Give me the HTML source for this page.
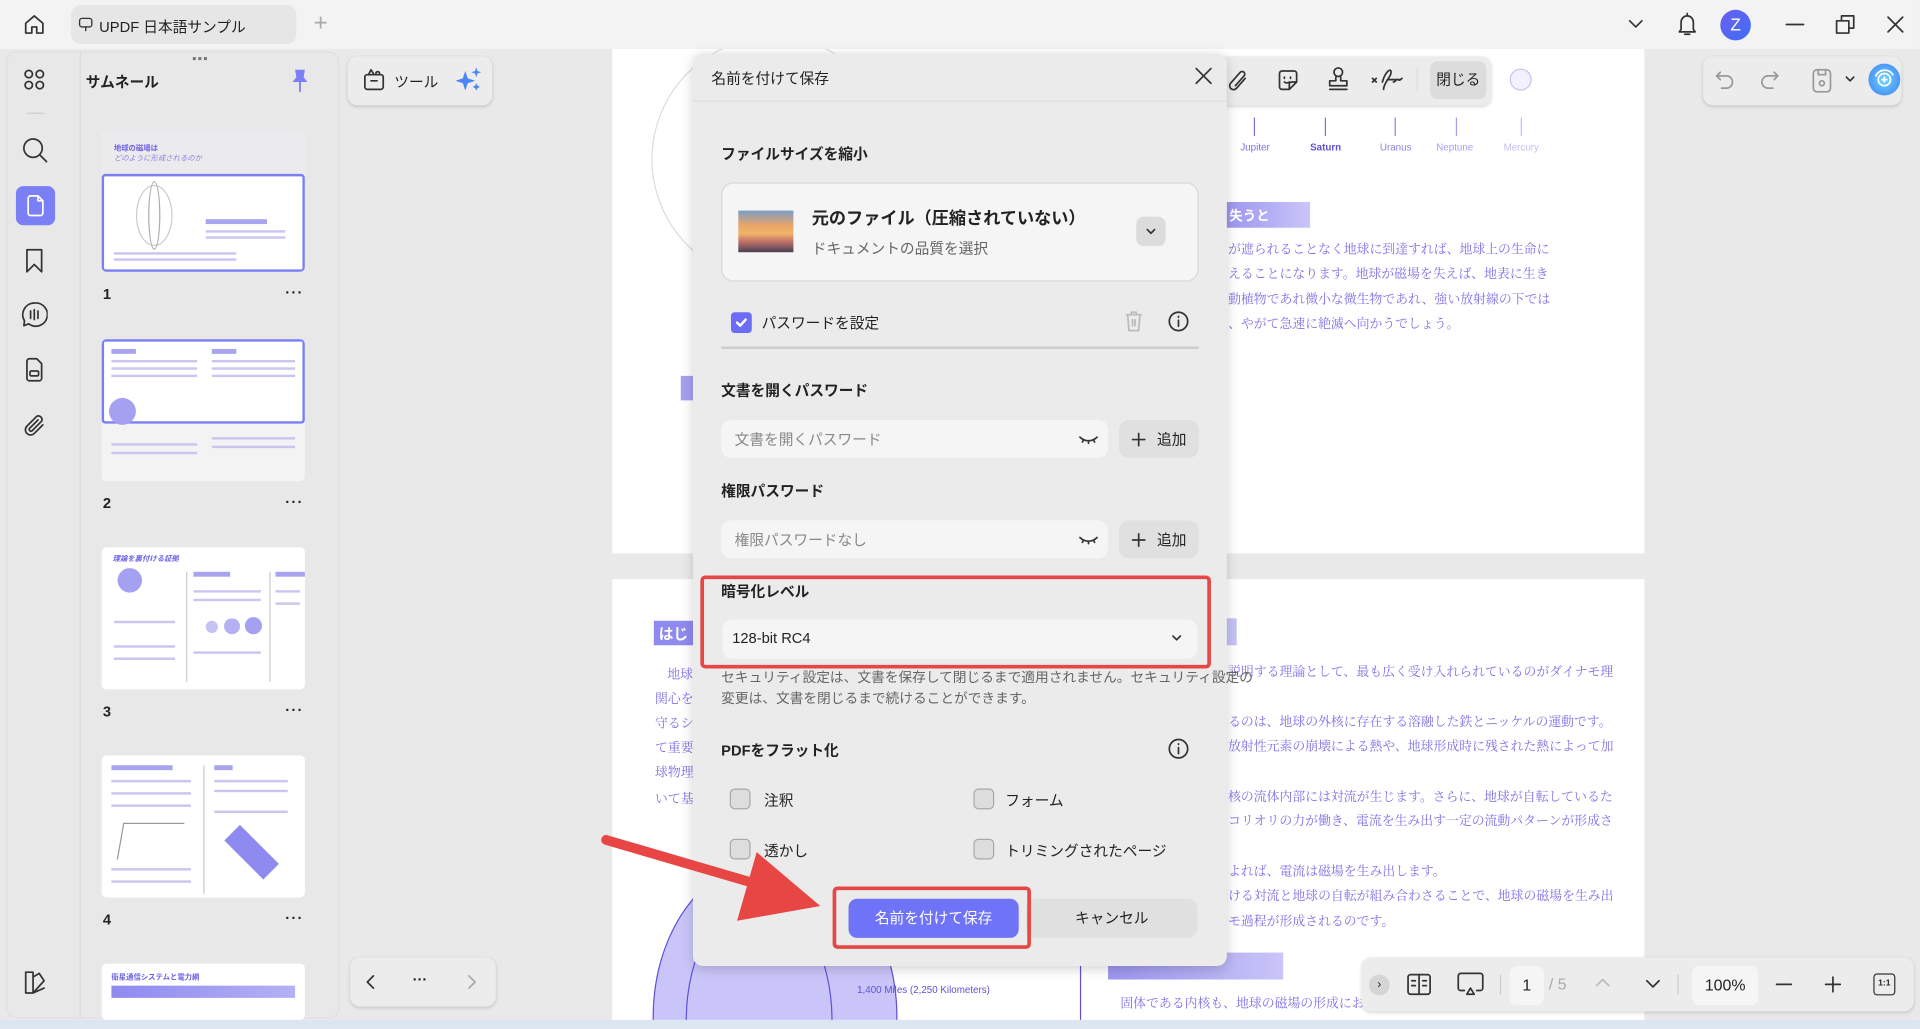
<!DOCTYPE html>
<html><head><meta charset="utf-8">
<style>
*{box-sizing:border-box;margin:0;padding:0}
html,body{width:1920px;height:1029px;overflow:hidden;background:#e9e9e9}
#w{position:absolute;left:0;top:0;width:1568px;height:840px;overflow:hidden;transform:scale(1.2244);transform-origin:0 0;background:#e9e9e9;font-family:"Liberation Sans","Noto Sans CJK JP",sans-serif;color:#222;font-size:12px}
.a{position:absolute}
.ic{position:absolute;fill:none;stroke:#333;stroke-width:1.4;stroke-linecap:round;stroke-linejoin:round}
.pt{position:absolute;font-family:"Noto Serif CJK JP","Noto Serif CJK SC",serif;color:#7d70e6;font-size:10.5px;white-space:nowrap}
.th{position:absolute;left:83px;width:166px;background:#fff;border-radius:4px;overflow:hidden}
.tl{position:absolute;height:2px;background:#c9c6ef}
.num{position:absolute;left:84px;font-size:12px;font-weight:bold}
.dots{position:absolute;left:233px;font-size:12px;font-weight:bold;letter-spacing:1px}
.cb{position:absolute;width:17px;height:17px;border:1.5px solid #aaa;border-radius:4px;background:#ddd}
.lb{position:absolute;font-size:12px;white-space:nowrap}
.h{position:absolute;font-size:12px;font-weight:bold;white-space:nowrap}
.add{position:absolute;left:914px;width:65px;height:31px;background:#e0e0e0;border-radius:8px;display:flex;align-items:center;justify-content:center;gap:9px;font-size:12px}
</style></head><body><div id="w">
<!-- top bar -->
<div class="a" style="left:0;top:0;width:1568px;height:40px;background:#f3f3f3"></div>
<svg class="ic" style="left:19px;top:11px" width="18" height="18" viewBox="0 0 18 18"><path d="M2 8L9 2l7 6v8H11v-5H7v5H2z"/></svg>
<div class="a" style="left:58px;top:4px;width:184px;height:32px;background:#e6e6e6;border-radius:8px"></div>
<svg class="ic" style="left:64px;top:14px;stroke-width:1.1" width="12" height="12" viewBox="0 0 12 12"><rect x="1" y="1" width="10" height="7" rx="2"/><path d="M6 8v3"/></svg>
<div class="lb" style="left:81px;top:13px;font-size:12px">UPDF 日本語サンプル</div>
<div class="lb" style="left:256px;top:8px;font-size:20px;color:#aaa;font-weight:200">+</div>
<svg class="ic" style="left:1329px;top:15px" width="14" height="10" viewBox="0 0 14 10"><path d="M2 2l5 5 5-5"/></svg>
<svg class="ic" style="left:1369px;top:10px" width="18" height="20" viewBox="0 0 18 20"><path d="M4 14V8a5 5 0 0110 0v6l1.5 2h-13z M7 18h4 M9 1v2"/></svg>
<div class="a" style="left:1405px;top:8px;width:25px;height:25px;border-radius:50%;background:linear-gradient(135deg,#6a5ff0,#3f6ef5);color:#fff;text-align:center;line-height:25px;font-size:14px">Z</div>
<svg class="ic" style="left:1458px;top:12px" width="16" height="16" viewBox="0 0 16 16"><path d="M1 8h14"/></svg>
<svg class="ic" style="left:1499px;top:12px" width="16" height="16" viewBox="0 0 16 16"><rect x="1" y="5" width="10" height="10"/><path d="M5 5V1h10v10h-4"/></svg>
<svg class="ic" style="left:1540px;top:12px" width="16" height="16" viewBox="0 0 16 16"><path d="M2 2l12 12M14 2L2 14"/></svg>

<!-- left panel -->
<div class="a" style="left:5px;top:42px;width:272px;height:790px;background:#e8e8e8;border-radius:8px;border:1px solid #e0e0e0"></div>
<div class="a" style="left:65px;top:42px;width:1px;height:790px;background:#dcdcdc"></div>
<div class="a" style="left:157px;top:43px;font-size:10px;color:#777;letter-spacing:1px">▪▪▪</div>
<svg class="ic" style="left:19px;top:56px" width="18" height="18" viewBox="0 0 18 18"><circle cx="4.5" cy="4.5" r="3"/><circle cx="13.5" cy="4.5" r="3"/><circle cx="4.5" cy="13.5" r="3"/><circle cx="13.5" cy="13.5" r="3"/></svg>
<div class="a" style="left:22px;top:92px;width:14px;height:1px;background:#ccc"></div>
<svg class="ic" style="left:18px;top:112px" width="22" height="22" viewBox="0 0 22 22"><circle cx="9" cy="9" r="7.5"/><path d="M15 15l5 5"/></svg>
<div class="a" style="left:13px;top:152px;width:32px;height:32px;background:#7b7ff5;border-radius:6px"></div>
<svg class="ic" style="left:21px;top:159px;stroke:#fff" width="16" height="18" viewBox="0 0 16 18"><path d="M2 3a2 2 0 012-2h6l4 4v10a2 2 0 01-2 2H4a2 2 0 01-2-2z M10 1v4h4"/></svg>
<svg class="ic" style="left:20px;top:203px" width="16" height="20" viewBox="0 0 16 20"><path d="M2 1h12v18l-6-6-6 6z"/></svg>
<svg class="ic" style="left:17px;top:246px" width="22" height="22" viewBox="0 0 22 22"><path d="M11 1.5a9.5 9.5 0 00-8 14.5L2.5 20l4-1.5A9.5 9.5 0 1011 1.5z M8 8v6 M11 7v8 M14 8v6"/></svg>
<svg class="ic" style="left:20px;top:292px" width="16" height="20" viewBox="0 0 16 20"><path d="M2 3a2 2 0 012-2h6l4 4v12a2 2 0 01-2 2H4a2 2 0 01-2-2z"/><rect x="4.5" y="11" width="7" height="4" rx="1"/></svg>
<svg class="ic" style="left:19px;top:337px" width="20" height="22" viewBox="0 0 20 22"><path d="M16 10l-7 7a4 4 0 01-6-6l8-8a3 3 0 014 4l-8 8a1.5 1.5 0 01-2-2l7-7"/></svg>
<svg class="ic" style="left:19px;top:793px" width="20" height="20" viewBox="0 0 20 20"><path d="M2 1h6v17H2z M8 5l5-3 4 6-9 10 M8 18l9-4"/></svg>

<div class="lb" style="left:70px;top:58px;font-size:12px;font-weight:bold">サムネール</div>
<svg class="a" style="left:237px;top:56px" width="16" height="20" viewBox="0 0 16 20"><path d="M4 1h8l-1 6 3 4H2l3-4z" fill="#7b7ff5"/><path d="M8 11v8" stroke="#7b7ff5" stroke-width="1.5"/></svg>

<!-- thumbnails -->
<div class="th" style="top:106px;height:116px;background:#f3f3f3">
 <div class="a" style="left:0;top:0;width:166px;height:36px;background:#ebebed"></div>
 <div class="a" style="left:10px;top:10px;font-size:6px;font-weight:bold;color:#6b5fe6">地球の磁場は</div>
 <div class="a" style="left:10px;top:18px;font-size:6px;color:#8a80e0;font-style:italic">どのように形成されるのか</div>
 <div class="a" style="left:0;top:36px;width:166px;height:80px;background:#fff;border:2px solid #7b7ff5;border-radius:3px"></div>
 <div class="a" style="left:28px;top:45px;width:30px;height:50px;border:1px solid #ccc;border-radius:50%"></div>
 <div class="a" style="left:38px;top:42px;width:10px;height:56px;border:1px solid #aaa;border-radius:50%"></div>
 <div class="tl" style="left:85px;top:73px;width:50px;background:#a8a4f0;height:4px"></div>
 <div class="tl" style="left:85px;top:82px;width:65px"></div><div class="tl" style="left:85px;top:87px;width:65px"></div>
 <div class="tl" style="left:10px;top:100px;width:100px"></div><div class="tl" style="left:10px;top:105px;width:100px"></div>
</div>
<div class="num" style="top:233px">1</div><div class="dots" style="top:232px">···</div>
<div class="th" style="top:277px;height:116px;background:#f3f3f3">
 <div class="a" style="left:0;top:0;width:166px;height:69px;background:#fff;border:2px solid #7b7ff5;border-radius:3px"></div>
 <div class="tl" style="left:8px;top:8px;width:20px;height:4px;background:#a8a4f0"></div><div class="tl" style="left:90px;top:8px;width:20px;height:4px;background:#a8a4f0"></div>
 <div class="tl" style="left:8px;top:17px;width:70px"></div><div class="tl" style="left:8px;top:23px;width:70px"></div><div class="tl" style="left:8px;top:29px;width:70px"></div>
 <div class="tl" style="left:90px;top:17px;width:68px"></div><div class="tl" style="left:90px;top:23px;width:68px"></div><div class="tl" style="left:90px;top:29px;width:68px"></div>
 <div class="a" style="left:6px;top:48px;width:22px;height:22px;border-radius:50%;background:#a5a1f1"></div>
 <div class="tl" style="left:8px;top:85px;width:70px"></div><div class="tl" style="left:8px;top:92px;width:70px"></div><div class="tl" style="left:90px;top:80px;width:68px"></div><div class="tl" style="left:90px;top:87px;width:68px"></div>
</div>
<div class="num" style="top:404px">2</div><div class="dots" style="top:403px">···</div>
<div class="th" style="top:447px;height:116px">
 <div class="a" style="left:9px;top:4px;font-size:6px;font-weight:bold;color:#6b5fe6;font-style:italic">理論を裏付ける証拠</div>
 <div class="a" style="left:13px;top:17px;width:20px;height:20px;border-radius:50%;background:#a5a1f1"></div>
 <div class="a" style="left:69px;top:20px;width:1px;height:90px;background:#ccc"></div><div class="a" style="left:137px;top:20px;width:1px;height:90px;background:#ccc"></div>
 <div class="tl" style="left:75px;top:20px;width:30px;height:4px;background:#a8a4f0"></div><div class="tl" style="left:142px;top:20px;width:30px;height:4px;background:#a8a4f0"></div>
 <div class="a" style="left:85px;top:60px;width:10px;height:10px;border-radius:50%;background:#c5c2f5"></div><div class="a" style="left:100px;top:58px;width:13px;height:13px;border-radius:50%;background:#b3b0f3"></div><div class="a" style="left:117px;top:57px;width:14px;height:14px;border-radius:50%;background:#a5a1f1"></div>
 <div class="tl" style="left:10px;top:60px;width:50px"></div><div class="tl" style="left:10px;top:80px;width:50px"></div><div class="tl" style="left:10px;top:90px;width:50px"></div><div class="tl" style="left:75px;top:35px;width:55px"></div><div class="tl" style="left:75px;top:42px;width:55px"></div><div class="tl" style="left:142px;top:35px;width:20px"></div><div class="tl" style="left:142px;top:45px;width:20px"></div><div class="tl" style="left:75px;top:85px;width:55px"></div>
</div>
<div class="num" style="top:574px">3</div><div class="dots" style="top:573px">···</div>
<div class="th" style="top:617px;height:116px">
 <div class="tl" style="left:8px;top:8px;width:50px;height:4px;background:#a8a4f0"></div><div class="tl" style="left:92px;top:8px;width:15px;height:4px;background:#a8a4f0"></div>
 <div class="a" style="left:83px;top:8px;width:1px;height:105px;background:#ccc"></div>
 <div class="tl" style="left:8px;top:20px;width:65px"></div><div class="tl" style="left:8px;top:30px;width:65px"></div><div class="tl" style="left:8px;top:40px;width:65px"></div>
 <div class="tl" style="left:92px;top:20px;width:60px"></div><div class="tl" style="left:92px;top:28px;width:60px"></div><div class="tl" style="left:92px;top:45px;width:60px"></div>
 <div class="a" style="left:15px;top:55px;width:50px;height:30px;border-left:1px solid #999;border-top:1px solid #999;transform:skewX(-10deg)"></div>
 <div class="a" style="left:100px;top:70px;width:45px;height:18px;background:#8f8af0;transform:rotate(45deg)"></div>
 <div class="tl" style="left:8px;top:92px;width:65px"></div><div class="tl" style="left:8px;top:102px;width:65px"></div>
</div>
<div class="num" style="top:744px">4</div><div class="dots" style="top:743px">···</div>
<div class="th" style="top:787px;height:46px">
 <div class="a" style="left:8px;top:6px;font-size:6px;font-weight:bold;color:#6b5fe6">衛星通信システムと電力網</div>
 <div class="a" style="left:8px;top:18px;width:150px;height:10px;background:linear-gradient(90deg,#8f8af0,#b4b1f5)"></div>
</div>

<!-- tools pill -->
<div class="a" style="left:284px;top:46px;width:118px;height:40px;background:#ececec;border-radius:8px;box-shadow:0 1px 3px rgba(0,0,0,.15)"></div>
<svg class="ic" style="left:296px;top:55px" width="20" height="20" viewBox="0 0 20 20"><rect x="2" y="6" width="15" height="12" rx="2"/><path d="M7 11h5 M5 6l2-4 2 3 M11 5a1.5 1.5 0 113 0"/></svg>
<div class="lb" style="left:322px;top:58px">ツール</div>
<svg class="a" style="left:372px;top:54px" width="22" height="22" viewBox="0 0 22 22"><path d="M8 4l2 6 6 2-6 2-2 6-2-6-6-2 6-2z" fill="#4a86f5"/><path d="M17 1l1 3 3 1-3 1-1 3-1-3-3-1 3-1z M17 14l1 2 2 1-2 1-1 2-1-2-2-1 2-1z" fill="#4a86f5"/></svg>
<div class="a" style="left:286px;top:782px;width:119px;height:40px;background:#ececec;border-radius:8px;box-shadow:0 1px 3px rgba(0,0,0,.15)"></div>
<svg class="ic" style="left:298px;top:795px" width="10" height="14" viewBox="0 0 10 14"><path d="M7 2L2 7l5 5"/></svg>
<div class="lb" style="left:337px;top:793px;font-weight:bold">···</div>
<svg class="ic" style="left:380px;top:795px;stroke:#aaa" width="10" height="14" viewBox="0 0 10 14"><path d="M3 2l5 5-5 5"/></svg>

<!-- pages -->
<div class="a" style="left:500px;top:40px;width:843px;height:412px;background:#fff;overflow:hidden">
 <div class="a" style="left:32px;top:-10px;width:200px;height:200px;border:1px solid #ddd;border-radius:50%"></div>
 <div class="a" style="left:56px;top:267px;width:10px;height:20px;background:#a5a1f1"></div>
</div>
<div class="a" style="left:1024px;top:96px;width:1px;height:15px;background:#7d70e6"></div><div class="a" style="left:1082px;top:96px;width:1px;height:15px;background:#7d70e6"></div><div class="a" style="left:1139px;top:96px;width:1px;height:15px;background:#8d82ea"></div><div class="a" style="left:1189px;top:96px;width:1px;height:15px;background:#a69ff0"></div><div class="a" style="left:1242px;top:96px;width:1px;height:15px;background:#c3bff5"></div>
<div class="a" style="left:1013px;top:116px;font-size:8px;color:#7d70e6">Jupiter</div><div class="a" style="left:1070px;top:116px;font-size:8px;color:#5e52d8;font-weight:bold">Saturn</div><div class="a" style="left:1127px;top:116px;font-size:8px;color:#8d82ea">Uranus</div><div class="a" style="left:1173px;top:116px;font-size:8px;color:#a69ff0">Neptune</div><div class="a" style="left:1228px;top:116px;font-size:8px;color:#c3bff5">Mercury</div>
<div class="a" style="left:1000px;top:165px;width:70px;height:21px;background:linear-gradient(90deg,#9c95f0,#c9c5f8);color:#fff;font-size:11px;font-weight:bold;padding:3px 4px">失うと</div>
<div class="pt" style="left:1003px;top:196px">が遮られることなく地球に到達すれば、地球上の生命に</div>
<div class="pt" style="left:1003px;top:216px">えることになります。地球が磁場を失えば、地表に生き</div>
<div class="pt" style="left:1003px;top:237px">動植物であれ微小な微生物であれ、強い放射線の下では</div>
<div class="pt" style="left:1003px;top:257px">、やがて急速に絶滅へ向かうでしょう。</div>

<div class="a" style="left:500px;top:473px;width:843px;height:360px;background:#fff;overflow:hidden">
 <div class="a" style="left:34px;top:34px;width:40px;height:20px;background:#8f8af0;color:#fff;font-size:12px;font-weight:bold;padding:2px 4px">はじ</div>
 <div class="a" style="left:500px;top:32px;width:10px;height:22px;background:#c5c2f5"></div>
 <div class="a" style="left:33px;top:227px;width:200px;height:260px;border-radius:50%;background:#c9c5f8;border:1px solid #5e52d8"></div>
 <div class="a" style="left:60px;top:260px;width:120px;height:200px;border-radius:50%;border:1px solid #5e52d8"></div>
 <div class="a" style="left:405px;top:305px;width:143px;height:22px;background:linear-gradient(90deg,#9c95f0,#c9c5f8)"></div>
 <div class="a" style="left:382px;top:307px;width:1px;height:55px;background:#5e52d8"></div>
 <div class="a" style="left:200px;top:331px;font-size:8px;color:#5e52d8">1,400 Miles (2,250 Kilometers)</div>
 <div class="pt" style="left:415px;top:339px">固体である内核も、地球の磁場の形成において一定の役割を果たしています。</div>
</div>
<div class="pt" style="left:545px;top:543px">地球</div><div class="pt" style="left:535px;top:563px">関心を</div><div class="pt" style="left:535px;top:583px">守るシ</div><div class="pt" style="left:535px;top:603px">て重要</div><div class="pt" style="left:535px;top:623px">球物理</div><div class="pt" style="left:535px;top:645px">いて基</div>
<div class="pt" style="left:1003px;top:541px">説明する理論として、最も広く受け入れられているのがダイナモ理</div>
<div class="pt" style="left:1003px;top:582px">るのは、地球の外核に存在する溶融した鉄とニッケルの運動です。</div>
<div class="pt" style="left:1003px;top:602px">放射性元素の崩壊による熱や、地球形成時に残された熱によって加</div>
<div class="pt" style="left:1003px;top:643px">核の流体内部には対流が生じます。さらに、地球が自転しているた</div>
<div class="pt" style="left:1003px;top:663px">コリオリの力が働き、電流を生み出す一定の流動パターンが形成さ</div>
<div class="pt" style="left:1003px;top:704px">よれば、電流は磁場を生み出します。</div>
<div class="pt" style="left:1003px;top:724px">ける対流と地球の自転が組み合わさることで、地球の磁場を生み出</div>
<div class="pt" style="left:1003px;top:745px">モ過程が形成されるのです。</div>

<!-- right toolbar -->
<div class="a" style="left:995px;top:46px;width:223px;height:40px;background:#ececec;border-radius:8px;box-shadow:0 1px 3px rgba(0,0,0,.15)"></div>
<svg class="ic" style="left:1003px;top:55px" width="18" height="22" viewBox="0 0 18 22"><path d="M14 9l-7 8a3 3 0 01-5-4l8-9a2 2 0 013 3l-7 8"/></svg>
<svg class="ic" style="left:1042px;top:55px" width="20" height="20" viewBox="0 0 20 20"><path d="M3 5a2 2 0 012-2h10a2 2 0 012 2v7l-6 6H5a2 2 0 01-2-2z M11 18v-4a2 2 0 012-2h4 M7 8v1 M12 8v1 M7 12c1 1 3 1 4 0"/></svg>
<svg class="ic" style="left:1083px;top:54px" width="20" height="22" viewBox="0 0 20 22"><circle cx="10" cy="5" r="3.5"/><path d="M8 9v3H3v4h14v-4h-5V9 M3 19h14"/></svg>
<svg class="ic" style="left:1120px;top:55px" width="28" height="20" viewBox="0 0 28 20"><path d="M1 9l3 3M4 9l-3 3 M9 12c3-10 8-12 7-7-1 4-6 8-6 13 M13 10h10 M18 12c2 0 2-3 4-2 1 1 2 0 3-1"/></svg>
<div class="a" style="left:1157px;top:55px;width:1px;height:20px;background:#ddd"></div>
<div class="a" style="left:1168px;top:50px;width:46px;height:31px;background:#dcdcdc;border-radius:6px;text-align:center;line-height:31px;font-size:12px">閉じる</div>
<div class="a" style="left:1233px;top:56px;width:18px;height:18px;border-radius:50%;border:1px solid #c5c2f5;background:#f2f1fd"></div>

<div class="a" style="left:1391px;top:46px;width:162px;height:40px;background:#ececec;border-radius:8px;box-shadow:0 1px 3px rgba(0,0,0,.15)"></div>
<svg class="ic" style="left:1401px;top:57px;stroke:#999" width="16" height="16" viewBox="0 0 16 16"><path d="M4 2L1 5l3 3 M1 5h8a5 5 0 010 10H5"/></svg>
<svg class="ic" style="left:1437px;top:57px;stroke:#999" width="16" height="16" viewBox="0 0 16 16"><path d="M12 2l3 3-3 3 M15 5H7a5 5 0 000 10h4"/></svg>
<svg class="ic" style="left:1479px;top:55px;stroke:#999" width="18" height="22" viewBox="0 0 18 22"><rect x="2" y="2" width="14" height="18" rx="3"/><path d="M6 2v4h6V2"/><circle cx="9" cy="13" r="2"/></svg>
<svg class="ic" style="left:1506px;top:61px" width="10" height="8" viewBox="0 0 10 8"><path d="M2 2l3 3 3-3"/></svg>
<div class="a" style="left:1526px;top:52px;width:26px;height:26px;border-radius:50%;background:radial-gradient(circle,#6fd6ff,#3b7cf5)"></div>
<svg class="ic" style="left:1530px;top:56px;stroke:#fff" width="18" height="18" viewBox="0 0 18 18"><circle cx="9" cy="9" r="5"/><path d="M9 7v4M7 9h4M2 6a8 8 0 0114-1"/></svg>

<!-- bottom toolbar -->
<div class="a" style="left:1112px;top:782px;width:451px;height:44px;background:#ececec;border-radius:8px;box-shadow:0 1px 3px rgba(0,0,0,.15)"></div>
<div class="a" style="left:1118px;top:796px;width:17px;height:17px;border-radius:50%;background:#d5d5d5;font-size:10px;text-align:center;line-height:17px">›</div>
<svg class="ic" style="left:1149px;top:794px" width="20" height="20" viewBox="0 0 20 20"><rect x="1" y="2" width="18" height="16" rx="2"/><path d="M10 2v16 M4 7h3M4 11h3M13 7h3M13 11h3"/></svg>
<svg class="ic" style="left:1189px;top:793px" width="24" height="22" viewBox="0 0 24 22"><path d="M7 16H4a2 2 0 01-2-2V4a2 2 0 012-2h16a2 2 0 012 2v10a2 2 0 01-2 2h-3 M12 14l-3 5h6z"/></svg>
<div class="a" style="left:1225px;top:796px;width:1px;height:16px;background:#ccc"></div>
<div class="a" style="left:1233px;top:789px;width:28px;height:32px;background:#f5f5f5;border-radius:6px;text-align:center;line-height:32px;font-size:13px">1</div>
<div class="lb" style="left:1265px;top:796px;font-size:13px;color:#aaa">/ 5</div>
<svg class="ic" style="left:1302px;top:797px;stroke:#bbb" width="14" height="10" viewBox="0 0 14 10"><path d="M2 8l5-5 5 5"/></svg>
<svg class="ic" style="left:1343px;top:799px" width="14" height="10" viewBox="0 0 14 10"><path d="M2 2l5 5 5-5"/></svg>
<div class="a" style="left:1370px;top:796px;width:1px;height:16px;background:#ccc"></div>
<div class="a" style="left:1382px;top:789px;width:54px;height:32px;background:#f5f5f5;border-radius:6px;text-align:center;line-height:32px;font-size:13px">100%</div>
<svg class="ic" style="left:1450px;top:797px" width="14" height="14" viewBox="0 0 14 14"><path d="M1 7h12"/></svg>
<svg class="ic" style="left:1490px;top:797px" width="14" height="14" viewBox="0 0 14 14"><path d="M1 7h12M7 1v12"/></svg>
<div class="a" style="left:1530px;top:795px;width:18px;height:18px;border:1.4px solid #333;border-radius:3px;font-size:7px;text-align:center;line-height:16px;font-weight:bold">1:1</div>

<div class="a" style="left:0;top:833px;width:1568px;height:7px;background:#dce6f3"></div>

<!-- dialog -->
<div class="a" style="left:566px;top:44px;width:436px;height:745px;background:#ebebeb;border-radius:8px;box-shadow:0 2px 10px rgba(0,0,0,.18)"></div>
<div class="a" style="left:566px;top:82px;width:436px;height:1px;background:#dedede"></div>
<div class="lb" style="left:581px;top:55px;font-size:12px">名前を付けて保存</div>
<svg class="ic" style="left:976px;top:55px" width="14" height="14" viewBox="0 0 14 14"><path d="M1 1l12 12M13 1L1 13"/></svg>
<div class="h" style="left:589px;top:117px">ファイルサイズを縮小</div>
<div class="a" style="left:589px;top:149px;width:390px;height:81px;background:#f5f5f5;border:1px solid #d8d8d8;border-radius:10px"></div>
<div class="a" style="left:603px;top:172px;width:45px;height:34px;background:linear-gradient(180deg,#7a9cc4 0%,#e8a56a 35%,#f0b56a 55%,#c9786a 72%,#4a3f55 100%)"></div>
<div class="lb" style="left:663px;top:168px;font-size:14px;font-weight:bold">元のファイル（圧縮されていない）</div>
<div class="lb" style="left:663px;top:194px;font-size:12px;color:#666">ドキュメントの品質を選択</div>
<div class="a" style="left:928px;top:177px;width:24px;height:24px;background:#dcdcdc;border-radius:6px"></div>
<svg class="ic" style="left:935px;top:186px" width="10" height="7" viewBox="0 0 10 7"><path d="M2 1.5l3 3 3-3"/></svg>
<div class="a" style="left:597px;top:255px;width:17px;height:17px;background:#6b6ef5;border-radius:3px"></div>
<svg class="ic" style="left:599px;top:257px;stroke:#fff;stroke-width:2" width="13" height="13" viewBox="0 0 13 13"><path d="M3 6.5l2.5 2.5 4.5-5"/></svg>
<div class="lb" style="left:622px;top:255px">パスワードを設定</div>
<svg class="ic" style="left:918px;top:253px;stroke:#bbb" width="16" height="18" viewBox="0 0 16 18"><path d="M2 4h12 M6 4V2h4v2 M3 4l1 13h8l1-13 M7 8v5M9 8v5"/></svg>
<svg class="ic" style="left:954px;top:254px" width="17" height="17" viewBox="0 0 17 17"><circle cx="8.5" cy="8.5" r="7.5"/><path d="M8.5 7.5v5 M8.5 4.5v.5"/></svg>
<div class="a" style="left:589px;top:283px;width:390px;height:1.5px;background:#ccc"></div>
<div class="h" style="left:589px;top:310px">文書を開くパスワード</div>
<div class="a" style="left:589px;top:343px;width:316px;height:31px;background:#f5f5f5;border-radius:8px"></div>
<div class="lb" style="left:600px;top:350px;color:#888">文書を開くパスワード</div>
<svg class="ic" style="left:881px;top:355px" width="16" height="8" viewBox="0 0 16 8"><path d="M1 2c4 4 10 4 14 0 M4 4l-1 2M8 5v2M12 4l1 2"/></svg>
<div class="add" style="top:343px"><svg class="ic" style="position:static" width="12" height="12" viewBox="0 0 12 12"><path d="M1 6h10M6 1v10"/></svg><span>追加</span></div>
<div class="h" style="left:589px;top:392px">権限パスワード</div>
<div class="a" style="left:589px;top:425px;width:316px;height:31px;background:#f5f5f5;border-radius:8px"></div>
<div class="lb" style="left:600px;top:432px;color:#888">権限パスワードなし</div>
<svg class="ic" style="left:881px;top:437px" width="16" height="8" viewBox="0 0 16 8"><path d="M1 2c4 4 10 4 14 0 M4 4l-1 2M8 5v2M12 4l1 2"/></svg>
<div class="add" style="top:425px"><svg class="ic" style="position:static" width="12" height="12" viewBox="0 0 12 12"><path d="M1 6h10M6 1v10"/></svg><span>追加</span></div>
<div class="h" style="left:589px;top:474px">暗号化レベル</div>
<div class="a" style="left:590px;top:506px;width:388px;height:32px;background:#f5f5f5;border-radius:8px"></div>
<div class="lb" style="left:598px;top:514px">128-bit RC4</div>
<svg class="ic" style="left:956px;top:518px" width="10" height="7" viewBox="0 0 10 7"><path d="M2 1.5l3 3 3-3"/></svg>
<div class="a" style="left:572px;top:470px;width:417px;height:76px;border:3px solid #e84545;border-radius:4px"></div>
<div class="lb" style="left:589px;top:546px;color:#666;line-height:17px;font-size:11.2px">セキュリティ設定は、文書を保存して閉じるまで適用されません。セキュリティ設定の<br>変更は、文書を閉じるまで続けることができます。</div>
<div class="h" style="left:589px;top:604px">PDFをフラット化</div>
<svg class="ic" style="left:954px;top:603px" width="17" height="17" viewBox="0 0 17 17"><circle cx="8.5" cy="8.5" r="7.5"/><path d="M8.5 7.5v5 M8.5 4.5v.5"/></svg>
<div class="cb" style="left:596px;top:644px"></div><div class="lb" style="left:624px;top:645px">注釈</div>
<div class="cb" style="left:795px;top:644px"></div><div class="lb" style="left:821px;top:645px">フォーム</div>
<div class="cb" style="left:596px;top:685px"></div><div class="lb" style="left:624px;top:686px">透かし</div>
<div class="cb" style="left:795px;top:685px"></div><div class="lb" style="left:821px;top:686px">トリミングされたページ</div>
<div class="a" style="left:838px;top:734px;width:140px;height:32px;background:#e0e0e0;border-radius:8px;text-align:center;line-height:32px">キャンセル</div>
<div class="a" style="left:693px;top:734px;width:139px;height:32px;background:#6f73f7;border-radius:7px;color:#fff;text-align:center;line-height:32px">名前を付けて保存</div>
<div class="a" style="left:680px;top:724px;width:162px;height:51px;border:3px solid #e84545;border-radius:4px"></div>

<!-- red arrow -->
<svg class="a" style="left:490px;top:680px" width="190" height="80" viewBox="0 0 190 80"><path d="M5 6L135 44" stroke="#e84545" stroke-width="8" stroke-linecap="round"/><path d="M128 16L180 60L112 72z" fill="#e84545"/></svg>
</div></body></html>
